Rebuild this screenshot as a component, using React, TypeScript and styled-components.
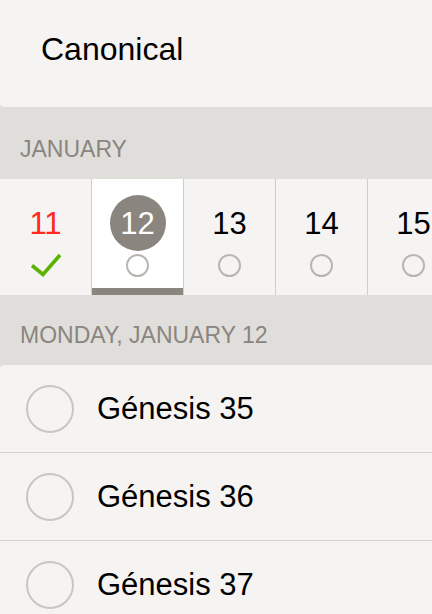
import React from "react";
import styled, { createGlobalStyle } from "styled-components";

const Global = createGlobalStyle`
  html, body { margin: 0; padding: 0; background: #dfdedb; }
  body { font-family: "Liberation Sans", Arial, sans-serif; -webkit-font-smoothing: antialiased; }
  #root { width: 432px; height: 614px; overflow: hidden; }
`;

const Page = styled.div`
  display: flex;
  flex-direction: column;
  width: 432px;
  height: 614px;
  background: #dfdedb;
  overflow: hidden;
  & > * { flex-shrink: 0; }
`;

const Header = styled.div`
  height: 107px;
  box-sizing: border-box;
  padding: 33px 0 0 41px;
  background: #f5f4f2;
  border-bottom-left-radius: 4px;
  font-size: 32px;
  line-height: 32px;
  color: #000;
`;

const SectionTitle = styled.div<{ $h: number }>`
  height: ${(p) => p.$h}px;
  box-sizing: border-box;
  display: flex;
  align-items: flex-end;
  padding: 0 0 18px 20px;
  font-size: 23px;
  line-height: 23px;
  color: #8a857f;
  text-transform: uppercase;
`;

const Strip = styled.div`
  display: flex;
  height: 116px;
  background: #f5f4f2;
  overflow: hidden;
`;

const DayCell = styled.div<{ $selected?: boolean }>`
  flex: 0 0 92px;
  box-sizing: border-box;
  border-right: 1px solid #cfcdc9;
  display: flex;
  flex-direction: column;
  align-items: center;
  padding-top: 16px;
  background: ${(p) => (p.$selected ? "#ffffff" : "#f5f4f2")};
  box-shadow: ${(p) => (p.$selected ? "inset 0 -7px 0 #8a857f" : "none")};
`;

const DayNumber = styled.div<{ $tone: "today" | "selected" | "normal" }>`
  width: 56px;
  height: 56px;
  border-radius: 50%;
  display: flex;
  align-items: center;
  justify-content: center;
  font-size: 31px;
  line-height: 31px;
  background: ${(p) => (p.$tone === "selected" ? "#8a857f" : "transparent")};
  color: ${(p) =>
    p.$tone === "selected" ? "#ffffff" : p.$tone === "today" ? "#fc2b1e" : "#000000"};
`;

const StatusBox = styled.div`
  margin-top: 2px;
  width: 32px;
  height: 24px;
  display: flex;
  align-items: center;
  justify-content: center;
`;

const SmallRing = styled.div`
  width: 19px;
  height: 19px;
  border: 2px solid #b9b5b0;
  border-radius: 50%;
`;

const List = styled.div`
  display: flex;
  flex-direction: column;
  background: #f5f4f2;
  border-top-left-radius: 4px;
`;

const Row = styled.div`
  height: 88px;
  box-sizing: border-box;
  display: flex;
  align-items: center;
  gap: 23px;
  padding-left: 26px;
  border-bottom: 1px solid #d4d2ce;
  font-size: 31px;
  color: #000;
`;

const BigRing = styled.div`
  width: 44px;
  height: 44px;
  border: 2px solid #c9c6c1;
  border-radius: 50%;
  flex-shrink: 0;
`;

const Check = () => (
  <svg width="32" height="24" viewBox="0 0 32 24">
    <polyline
      points="2,12.5 13,21.5 30,2"
      fill="none"
      stroke="#5bb300"
      strokeWidth="3.6"
      strokeLinejoin="miter"
    />
  </svg>
);

const days = [
  { n: 11, tone: "today" as const, done: true },
  { n: 12, tone: "selected" as const, done: false },
  { n: 13, tone: "normal" as const, done: false },
  { n: 14, tone: "normal" as const, done: false },
  { n: 15, tone: "normal" as const, done: false },
];

const readings = ["Génesis 35", "Génesis 36", "Génesis 37"];

export default function App() {
  return (
    <>
      <Global />
      <Page>
        <Header>Canonical</Header>
        <SectionTitle $h={72}>January</SectionTitle>
        <Strip>
          {days.map((d) => (
            <DayCell key={d.n} $selected={d.tone === "selected"}>
              <DayNumber $tone={d.tone}>{d.n}</DayNumber>
              <StatusBox>{d.done ? <Check /> : <SmallRing />}</StatusBox>
            </DayCell>
          ))}
        </Strip>
        <SectionTitle $h={70}>Monday, January 12</SectionTitle>
        <List>
          {readings.map((r) => (
            <Row key={r}>
              <BigRing />
              <span>{r}</span>
            </Row>
          ))}
        </List>
      </Page>
    </>
  );
}
